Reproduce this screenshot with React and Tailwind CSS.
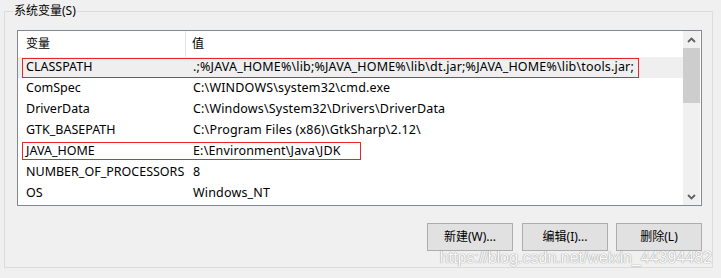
import React from "react";

const rows = [
  ["CLASSPATH", ".;%JAVA_HOME%\\lib;%JAVA_HOME%\\lib\\dt.jar;%JAVA_HOME%\\lib\\tools.jar;"],
  ["ComSpec", "C:\\WINDOWS\\system32\\cmd.exe"],
  ["DriverData", "C:\\Windows\\System32\\Drivers\\DriverData"],
  ["GTK_BASEPATH", "C:\\Program Files (x86)\\GtkSharp\\2.12\\"],
  ["JAVA_HOME", "E:\\Environment\\Java\\JDK"],
  ["NUMBER_OF_PROCESSORS", "8"],
  ["OS", "Windows_NT"],
];

function Chevron({ up }) {
  return (
    <svg width="9" height="6" viewBox="0 0 9 6">
      <path
        d={up ? "M1 5 L4.5 1.5 L8 5" : "M1 1 L4.5 4.5 L8 1"}
        fill="none"
        stroke="#606060"
        strokeWidth="1.8"
      />
    </svg>
  );
}

export default function App() {
  return (
    <div
      className="relative w-[721px] h-[278px] bg-[#f0f0f0] pt-[11px] pl-[4px] text-[12px] text-black overflow-hidden"
      style={{ fontFamily: '"Noto Sans", "Noto Sans CJK SC", sans-serif' }}
    >
      <div className="relative w-[709px] h-[257px] border border-[#dcdcdc] pt-[18px] pl-[12px]">
        <div className="absolute left-[8px] top-[-10px] bg-[#f0f0f0] px-[1px] leading-[18px] text-[12px]">
          系统变量(S)
        </div>
        <div className="flex w-[685px] h-[176px] border border-[#828790] bg-white">
          <div className="flex flex-col w-[665px]">
            <div className="flex h-[26px] items-center">
              <div className="w-[168px] h-full flex items-center pl-[8px] border-r border-[#e5e5e5]">
                变量
              </div>
              <div className="pl-[6px]">值</div>
            </div>
            {rows.map(([k, v], i) => (
              <div
                key={k}
                className={
                  "relative flex h-[21px] items-center text-[12.5px] " +
                  (i === 0 ? "bg-[#efefef]" : "")
                }
              >
                <div className="w-[169px] pl-[8px] whitespace-nowrap">{k}</div>
                <div className="pl-[6px] whitespace-nowrap tracking-[0.17px]">{v}</div>
                {i === 0 && (
                  <div className="absolute left-[4px] top-[1px] w-[617px] h-[20px] border border-[#e8262b]" />
                )}
                {i === 4 && (
                  <div className="absolute left-[4px] top-[1px] w-[339px] h-[18px] border border-[#e8262b]" />
                )}
              </div>
            ))}
          </div>
          <div className="flex flex-col w-[17px] bg-[#f0f0f0]">
            <div className="h-[17px] flex items-center justify-center">
              <Chevron up />
            </div>
            <div className="h-[55px] bg-[#cdcdcd]" />
            <div className="flex-1" />
            <div className="h-[17px] flex items-center justify-center">
              <Chevron />
            </div>
          </div>
        </div>
        <div className="flex w-[685px] justify-end mt-[17px]">
          <button className="w-[86px] h-[28px] bg-[#e1e1e1] border border-[#adadad] text-[12px]">
            新建(W)...
          </button>
          <button className="ml-[9px] w-[86px] h-[28px] bg-[#e1e1e1] border border-[#adadad] text-[12px]">
            编辑(I)...
          </button>
          <button className="ml-[8px] w-[86px] h-[28px] bg-[#e1e1e1] border border-[#adadad] text-[12px]">
            删除(L)
          </button>
        </div>
      </div>
      <div
        className="absolute right-[9px] top-[248px] text-[16px] leading-[20px] text-[#fbfbfb] whitespace-nowrap [text-shadow:0_0_1px_#9a9a9a,0_0_1px_#9a9a9a]"
        style={{ fontFamily: '"Liberation Sans", Arial, sans-serif' }}
      >
        https://blog.csdn.net/weixin_44394482
      </div>
    </div>
  );
}
